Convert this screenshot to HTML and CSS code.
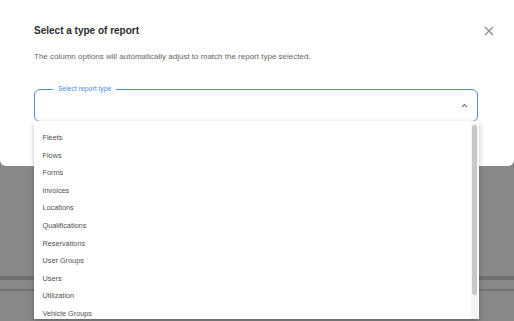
FILE: index.html
```html
<!DOCTYPE html>
<html lang="en">
<head>
  <meta charset="UTF-8" />
  <meta name="viewport" content="width=device-width, initial-scale=1.0"/>
  <title>Select a type of report</title>
  <link rel="stylesheet" href="styles.css">
</head>
<body>
  <div class="modal">
    <div class="modal-header">
      <h2 class="modal-title">Select a type of report</h2>
      <button class="modal-close" type="button" aria-label="Close">
        <svg width="10" height="10" viewBox="0 0 10 10"><path d="M1 1L9 9M9 1L1 9" stroke="#8a8a8a" stroke-width="1.2" fill="none"/></svg>
      </button>
    </div>
    <p class="modal-text">The column options will automatically adjust to match the report type selected.</p>

    <div class="campo-select">
      <span class="campo-label">Select report type</span>
      <svg class="campo-chevron" width="7" height="5" viewBox="0 0 7 5"><path d="M1 4L3.5 1.5L6 4" stroke="#777" stroke-width="1.1" fill="none"/></svg>

      <div class="lista-opciones">
        <ul>
          <li>Fleets</li>
          <li>Flows</li>
          <li>Forms</li>
          <li>Invoices</li>
          <li>Locations</li>
          <li>Qualifications</li>
          <li>Reservations</li>
          <li>User Groups</li>
          <li>Users</li>
          <li>Utilization</li>
          <li>Vehicle Groups</li>
        </ul>
        <div class="scroll-pista"><div class="scroll-barra"></div></div>
      </div>
    </div>
  </div>

  <div class="fondo">
    <div class="fondo-franja"></div>
    <div class="fondo-linea"></div>
  </div>
</body>
</html>
```

FILE: styles.css
```css
body {
  margin: 0;
  padding: 0;
  height: 321px;
  overflow: hidden;
  background: #888888;
  font-family: 'Liberation Sans', Arial, sans-serif;
}

.modal {
  position: relative;
  height: 166px;
  padding: 0 36px 0 34px;
  background: #ffffff;
  border-radius: 0 0 6px 6px;
  box-sizing: border-box;
  z-index: 2;
}

.modal-header {
  display: flex;
  align-items: center;
  justify-content: space-between;
  padding-top: 25px;
}

.modal-title {
  margin: 0;
  font-size: 10px;
  line-height: 12px;
  font-weight: 700;
  color: #2b2b2b;
}

.modal-close {
  display: flex;
  padding: 0;
  margin-right: -16px;
  border: none;
  background: none;
}

.modal-text {
  margin: 15px 0 0;
  font-size: 8px;
  line-height: 10px;
  color: #666666;
}

.campo-select {
  position: relative;
  height: 33px;
  margin-top: 27px;
  border: 1.5px solid #4a8be3;
  border-radius: 6px;
  box-sizing: border-box;
}

.campo-label {
  position: absolute;
  top: -6px;
  left: 18px;
  padding: 0 5px;
  background: #ffffff;
  font-size: 6.8px;
  line-height: 10px;
  color: #4a8be3;
}

.campo-chevron {
  position: absolute;
  right: 9px;
  top: 13px;
}

.lista-opciones {
  position: absolute;
  top: 31px;
  left: -1.5px;
  right: -1.5px;
  height: 198px;
  background: #ffffff;
  box-shadow: 0 2px 5px rgba(0, 0, 0, 0.25);
}

.lista-opciones ul {
  margin: 0;
  padding: 8px 0 0;
  list-style: none;
}

.lista-opciones li {
  padding: 0 9px;
  height: 17.6px;
  line-height: 17.6px;
  font-size: 7.3px;
  color: #505050;
}

.scroll-pista {
  position: absolute;
  top: 2px;
  right: 1px;
  bottom: 0;
  width: 7px;
  background: #f4f4f4;
}

.scroll-barra {
  margin: 2px 1px 0 1.5px;
  height: 170px;
  background: #c8c8c8;
  border-radius: 2px;
}

.fondo {
  padding-top: 110px;
}

.fondo-franja {
  height: 4px;
  background: #6f6f6f;
}

.fondo-linea {
  height: 2px;
  margin-top: 9px;
  background: #717171;
}
```
